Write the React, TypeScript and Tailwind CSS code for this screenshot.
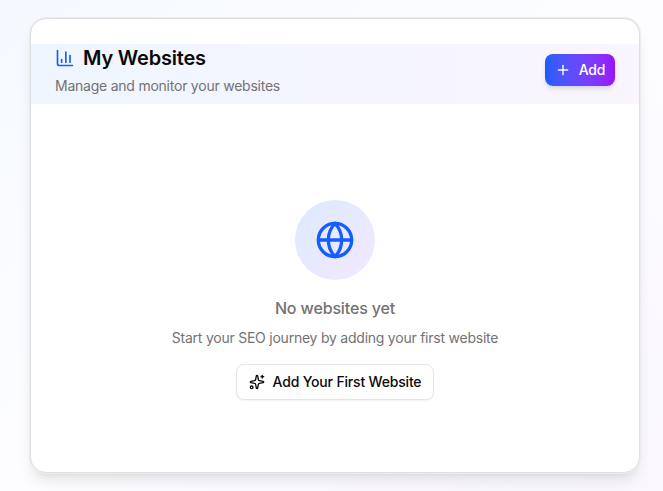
import { ChartColumn, Globe, Plus, Sparkles } from "lucide-react";

export default function App() {
  return (
    <div className="h-[491px] overflow-hidden bg-gradient-to-br from-[#f5f9ff] via-[#fdfdff] to-[#faf7ff] pl-[30px] pr-[23px] pt-[18px] font-['Inter',sans-serif]">
      <div className="h-[455px] rounded-2xl border border-[#dfdfdf] bg-white pt-[25px] shadow-[0_0_0_1px_#ececec,0_10px_15px_-3px_rgba(0,0,0,0.1),0_4px_6px_-4px_rgba(0,0,0,0.1)]">
        <div className="flex h-[60px] items-center justify-between bg-gradient-to-r from-[#eff6ff] to-[#faf5ff] pb-2 pl-6 pr-6">
          <div className="flex flex-col">
            <div className="flex h-7 items-center gap-2">
              <ChartColumn className="h-5 w-5 text-[#155dfc]" strokeWidth={2} />
              <h2 className="text-xl font-semibold leading-7 tracking-[-0.2px] text-[#0a0a0a]">My Websites</h2>
            </div>
            <p className="mt-1 text-sm leading-5 tracking-[-0.235px] text-[#737373]">Manage and monitor your websites</p>
          </div>
          <button className="flex h-8 w-[70px] items-center justify-center gap-2 rounded-lg bg-gradient-to-r from-blue-600 to-purple-600 text-sm font-medium tracking-[-0.2px] text-white shadow-md">
            <Plus className="h-4 w-4" />
            Add
          </button>
        </div>
        <div className="flex flex-col items-center pt-24">
          <div className="flex h-20 w-20 items-center justify-center rounded-full bg-gradient-to-br from-[#dbeafe] to-[#f3e8ff]">
            <Globe className="h-10 w-10 text-[#155dfc]" strokeWidth={2} />
          </div>
          <h3 className="mt-4 text-base font-medium leading-6 tracking-[-0.14px] text-[#737373]">No websites yet</h3>
          <p className="mt-2 text-sm leading-5 tracking-[-0.235px] text-[#737373]">Start your SEO journey by adding your first website</p>
          <button className="mt-4 flex h-9 w-[198px] items-center justify-center gap-2 rounded-lg border border-[#e5e5e5] bg-white text-sm font-medium tracking-[-0.18px] text-[#0a0a0a] shadow-xs">
            <Sparkles className="h-4 w-4" />
            Add Your First Website
          </button>
        </div>
      </div>
    </div>
  );
}
